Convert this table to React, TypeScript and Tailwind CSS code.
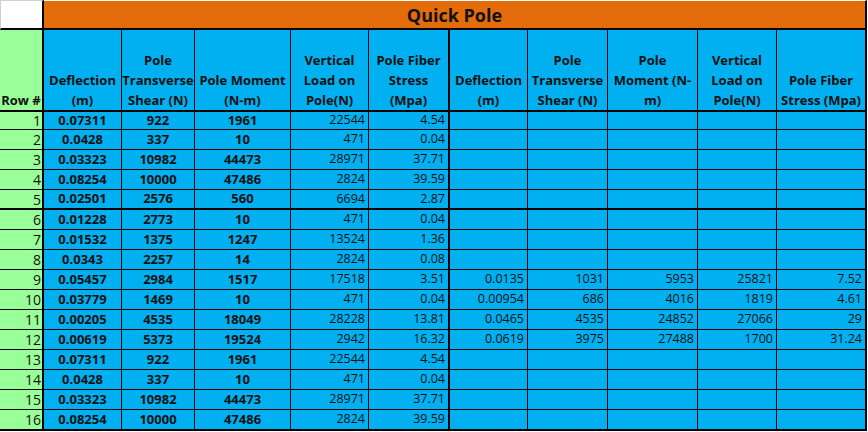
const left: [string, string, string, string, string][] = [
  ["0.07311", "922", "1961", "22544", "4.54"],
  ["0.0428", "337", "10", "471", "0.04"],
  ["0.03323", "10982", "44473", "28971", "37.71"],
  ["0.08254", "10000", "47486", "2824", "39.59"],
  ["0.02501", "2576", "560", "6694", "2.87"],
  ["0.01228", "2773", "10", "471", "0.04"],
  ["0.01532", "1375", "1247", "13524", "1.36"],
  ["0.0343", "2257", "14", "2824", "0.08"],
  ["0.05457", "2984", "1517", "17518", "3.51"],
  ["0.03779", "1469", "10", "471", "0.04"],
  ["0.00205", "4535", "18049", "28228", "13.81"],
  ["0.00619", "5373", "19524", "2942", "16.32"],
  ["0.07311", "922", "1961", "22544", "4.54"],
  ["0.0428", "337", "10", "471", "0.04"],
  ["0.03323", "10982", "44473", "28971", "37.71"],
  ["0.08254", "10000", "47486", "2824", "39.59"],
];

const right: Record<number, string[]> = {
  9: ["0.0135", "1031", "5953", "25821", "7.52"],
  10: ["0.00954", "686", "4016", "1819", "4.61"],
  11: ["0.0465", "4535", "24852", "27066", "29"],
  12: ["0.0619", "3975", "27488", "1700", "31.24"],
};

const headers: string[][] = [
  ["Deflection", "(m)"],
  ["Pole", "Transverse", "Shear (N)"],
  ["Pole Moment", "(N-m)"],
  ["Vertical", "Load on", "Pole(N)"],
  ["Pole Fiber", "Stress", "(Mpa)"],
  ["Deflection", "(m)"],
  ["Pole", "Transverse", "Shear (N)"],
  ["Pole", "Moment (N-", "m)"],
  ["Vertical", "Load on", "Pole(N)"],
  ["Pole Fiber", "Stress (Mpa)"],
];

function rowHeight(r: number) {
  if (r === 1) return "h-[18px] border-b";
  if (r === 16) return "h-[21px] border-b-2";
  if (r === 5) return "h-[20px] border-b-2";
  return "h-[20px] border-b";
}

function colRight(c: number) {
  return c === 5 || c === 10 ? "border-r-2" : "border-r";
}

export default function App() {
  return (
    <div
      className="w-[868px] h-[432px] bg-white text-[#111] overflow-hidden"
      style={{ fontFamily: '"Open Sans", "Liberation Sans", sans-serif' }}
    >
      <div className="grid w-[867px] grid-cols-[44px_78px_73px_96px_78px_81px_78px_80px_90px_79px_90px]">
        {/* title row */}
        <div className="h-[30px] bg-white border-t border-l border-[#d0d0d0] border-r-2 border-r-black border-b-2 border-b-black" />
        <div className="col-span-10 h-[30px] bg-[#e46c0a] border-t border-t-white border-b-2 border-r-2 border-b-black border-r-black flex items-center justify-center text-[18px] font-bold leading-none">
          Quick Pole
        </div>

        {/* header row */}
        <div className="h-[82px] bg-[#99ff99] border-r-2 border-b-2 border-black flex items-end justify-center text-[13px] font-bold leading-[20px] whitespace-nowrap">
          Row #
        </div>
        {headers.map((lines, i) => (
          <div
            key={i}
            className={`h-[82px] bg-[#00b0f0] border-b-2 border-black ${colRight(i + 1)} flex flex-col justify-end items-center text-center text-[13px] font-bold leading-[20px] whitespace-nowrap`}
          >
            {lines.map((l, j) => (
              <span key={j}>{l}</span>
            ))}
          </div>
        ))}

        {/* data rows */}
        {left.map((vals, idx) => {
          const r = idx + 1;
          const h = rowHeight(r);
          const rv = right[r];
          return (
            <div key={r} className="contents">
              <div className={`${h} bg-[#99ff99] border-r-2 border-black flex items-center justify-end pr-px text-[14px]`}>
                {r}
              </div>
              {vals.map((v, c) => (
                <div
                  key={c}
                  className={`${h} bg-[#00b0f0] border-black ${colRight(c + 1)} flex items-center ${
                    c < 3 ? "justify-center font-bold text-[13px]" : "justify-end pr-[3px] text-[12.5px]"
                  }`}
                >
                  {v}
                </div>
              ))}
              {[0, 1, 2, 3, 4].map((c) => (
                <div
                  key={`r${c}`}
                  className={`${h} bg-[#00b0f0] border-black ${colRight(c + 6)} flex items-center justify-end pr-[3px] text-[12.5px]`}
                >
                  {rv ? rv[c] : ""}
                </div>
              ))}
            </div>
          );
        })}
      </div>
    </div>
  );
}
